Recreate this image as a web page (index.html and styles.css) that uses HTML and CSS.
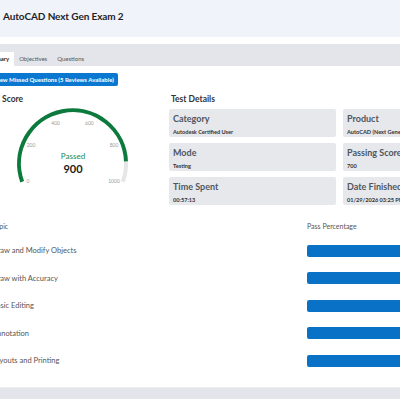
FILE: index.html
```html
<!DOCTYPE html>
<html lang="en">
<head>
  <meta charset="UTF-8">
  <title>AutoCAD Next Gen Exam 2 - Results</title>
  <link rel="stylesheet" href="styles.css">
</head>
<body>
  <div class="page">
    <header class="topbar">
      <h1 class="title">AutoCAD Next Gen Exam 2</h1>
    </header>

    <div class="panel">
      <!-- Tabs -->
      <nav class="tabs">
        <a class="tab active">Summary</a>
        <a class="tab">Objectives</a>
        <a class="tab">Questions</a>
      </nav>

      <div class="panel-body">
        <button class="btn-review">View Missed Questions (5 Reviews Available)</button>

        <div class="summary">
          <section class="score">
            <h2 class="section-title score-title">Score</h2>
            <svg class="gauge" width="150" height="90" viewBox="0 0 150 90">
              <path d="M 22.2 75.8 A 53.5 53.5 0 1 1 126 55.6" fill="none" stroke="#0c7a3c" stroke-width="4"/>
              <path d="M 126 55.6 A 53.5 53.5 0 0 1 122.8 75.8" fill="none" stroke="#e6e6e6" stroke-width="4"/>
              <g class="ticks">
                <text x="28" y="77">0</text>
                <text x="31" y="41">200</text>
                <text x="55.6" y="19">400</text>
                <text x="89.4" y="19">600</text>
                <text x="114" y="41">800</text>
                <text x="114" y="77">1000</text>
              </g>
              <text class="gauge-status" x="73" y="53">Passed</text>
              <text class="gauge-value" x="73" y="67">900</text>
            </svg>
          </section>

          <section class="details">
            <h2 class="section-title">Test Details</h2>
            <div class="cards">
              <div class="card">
                <div class="card-label">Category</div>
                <div class="card-value">Autodesk Certified User</div>
              </div>
              <div class="card">
                <div class="card-label">Product</div>
                <div class="card-value">AutoCAD (Next Generation)</div>
              </div>
              <div class="card">
                <div class="card-label">Mode</div>
                <div class="card-value">Testing</div>
              </div>
              <div class="card">
                <div class="card-label">Passing Score</div>
                <div class="card-value">700</div>
              </div>
              <div class="card">
                <div class="card-label">Time Spent</div>
                <div class="card-value">00:57:13</div>
              </div>
              <div class="card">
                <div class="card-label">Date Finished</div>
                <div class="card-value">01/29/2026 03:25 PM</div>
              </div>
            </div>
          </section>
        </div>

        <table class="topics">
          <thead>
            <tr>
              <th class="col-topic">Topic</th>
              <th>Pass Percentage</th>
            </tr>
          </thead>
          <tbody>
            <tr><td>Draw and Modify Objects</td><td><div class="bar" style="width: 100%"></div></td></tr>
            <tr><td>Draw with Accuracy</td><td><div class="bar" style="width: 100%"></div></td></tr>
            <tr><td>Basic Editing</td><td><div class="bar" style="width: 100%"></div></td></tr>
            <tr><td>Annotation</td><td><div class="bar" style="width: 100%"></div></td></tr>
            <tr><td>Layouts and Printing</td><td><div class="bar" style="width: 100%"></div></td></tr>
          </tbody>
        </table>
      </div>
    </div>

    <div class="page-foot"></div>
  </div>
</body>
</html>
```

FILE: styles.css
```css
body {
  margin: 0;
  background-color: #fff;
  font-family: Lato, "Open Sans", sans-serif;
  color: #333;
  overflow: hidden;
}

.page {
  margin-left: -16px;
  width: 520px;
}

/* Top header */
.topbar {
  background-color: #f0f3fa;
  height: 37px;
  box-sizing: border-box;
  padding: 9px 0 0 19px;
  margin-bottom: 7px;
}

.title {
  margin: 0;
  font-size: 10px;
  line-height: 14px;
  font-weight: 700;
  letter-spacing: -0.1px;
  color: #1f2328;
}

/* Tabs */
.tabs {
  display: flex;
  background-color: #e3e5ea;
  height: 22px;
  padding-top: 8px;
  box-sizing: border-box;
}

.tab {
  font-size: 6px;
  color: #555;
  padding: 0 5px;
  height: 14px;
  line-height: 14px;
}

.tab.active {
  margin-left: -5px;
  background-color: #fff;
  color: #222;
  font-weight: 700;
}

.panel-body {
  padding: 7px 6px 12px;
}

.btn-review {
  display: block;
  height: 13px;
  padding: 0 4px;
  border: none;
  border-radius: 2px;
  background-color: #0a78d0;
  color: #fff;
  font-family: inherit;
  font-size: 6px;
  font-weight: 700;
  cursor: pointer;
}

/* Score + details */
.summary {
  display: grid;
  grid-template-columns: 179px 1fr;
  margin-top: 8px;
}

.section-title {
  margin: 0 0 5px;
  font-size: 8.5px;
  font-weight: 700;
  color: #333;
  line-height: 10px;
  padding-left: 2px;
}

.score-title {
  padding-left: 12px;
}

.gauge {
  display: block;
  margin-left: 10px;
  margin-top: -3px;
}

.ticks text {
  font-size: 5px;
  fill: #9a9a9a;
  text-anchor: middle;
  font-family: Lato, sans-serif;
}

.gauge-status {
  font-size: 8px;
  fill: #1b8a4c;
  text-anchor: middle;
  font-family: Lato, sans-serif;
}

.gauge-value {
  font-size: 11px;
  font-weight: 700;
  fill: #222;
  text-anchor: middle;
  font-family: Lato, sans-serif;
}

.cards {
  display: grid;
  grid-template-columns: 167px 167px;
  grid-auto-rows: 28px;
  column-gap: 7px;
  row-gap: 6px;
}

.card {
  background-color: #e6e8ec;
  border-radius: 2px;
  padding: 4px 4px 0;
}

.card-label {
  font-size: 9px;
  font-weight: 700;
  color: #4f565f;
  line-height: 12px;
}

.card-value {
  font-size: 5.6px;
  font-weight: 700;
  color: #333;
  margin-top: 3px;
  white-space: nowrap;
}

/* Topics table */
.topics {
  margin-top: 10px;
  margin-left: 2px;
  border-collapse: collapse;
  width: 500px;
}

.topics th {
  text-align: left;
  font-size: 7px;
  font-weight: 400;
  color: #555;
  height: 22px;
  padding: 0;
}

.topics .col-topic {
  width: 315px;
}

.topics td {
  height: 27.5px;
  padding: 0;
  font-size: 7.5px;
  color: #555;
}

.bar {
  height: 12px;
  border-radius: 2px;
  background-color: #0a72c6;
}

.page-foot {
  background-color: #e3e5ea;
  border-top: 1px solid #eceef2;
  height: 40px;
}
```
